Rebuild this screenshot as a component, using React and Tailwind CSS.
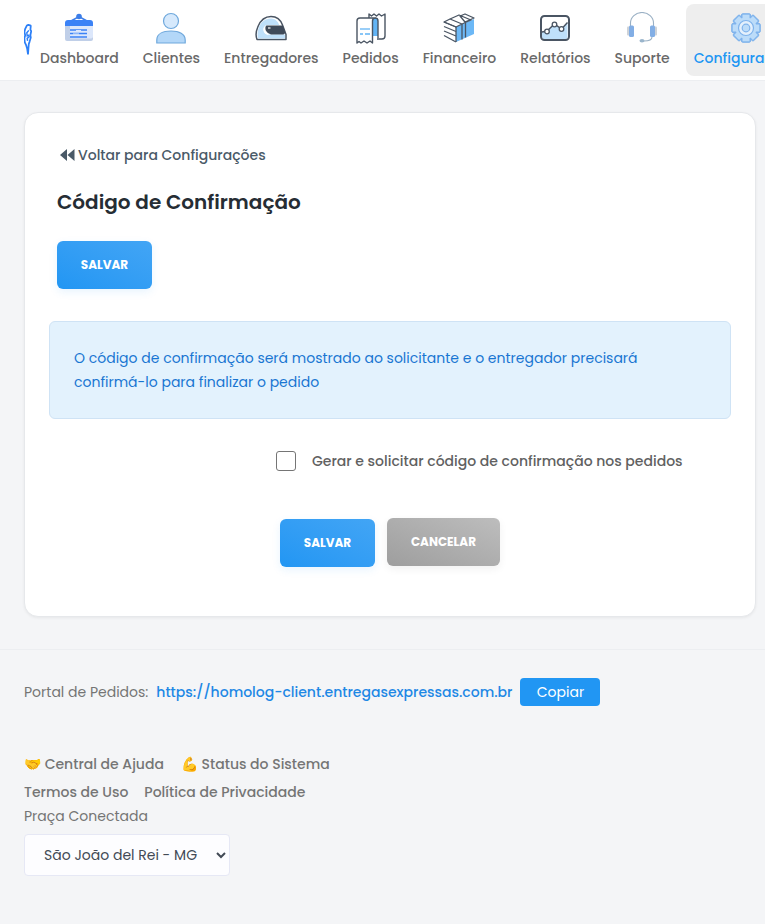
import React from "react";

function IconDash() {
  return (
    <svg width="30" height="30" viewBox="0 0 30 30">
      <path d="M7 8 L15 3.500 L23 8" fill="none" stroke="#3b7de8" strokeWidth="1.5" />
      <circle cx="15" cy="3.500" r="2.800" fill="#3b7de8" />
      <path d="M1 10a3 3 0 0 1 3-3h22a3 3 0 0 1 3 3v4H1z" fill="#3b82f6" />
      <path d="M1 13h28v13a2 2 0 0 1-2 2H3a2 2 0 0 1-2-2z" fill="#c0cfe8" />
      <path d="M6 13h23v10.500a2 2 0 0 1-2 2H6z" fill="#dce7fb" />
      <path d="M6 17h17M6 20.500h17M6 24h17" stroke="#3b82f6" strokeWidth="1.500" />
      <path d="M12 17.500h5M9 21h6" stroke="#dce7fb" strokeWidth="1.200" />
    </svg>
  );
}
function IconUser() {
  return (
    <svg width="30" height="32" viewBox="0 0 30 32">
      <circle cx="15" cy="9" r="7.500" fill="#d6e9fc" stroke="#6fa8dc" strokeWidth="1.200" />
      <path d="M.8 31v-3c0-6 6-9 14.200-9s14.200 3 14.200 9v3z" fill="#b3d7f8" stroke="#6fa8dc" strokeWidth="1.200" />
    </svg>
  );
}
function IconHelmet() {
  return (
    <svg width="32" height="26" viewBox="0 0 32 26">
      <path d="M2 24.500c-1.200-3-1.200-8 1-13C5.500 5.500 10.500 1.500 16 1.500c5.500 0 9.500 3 11.500 8.500l3.500 9.500v5z" fill="#fff" stroke="#4a5563" strokeWidth="1.500" strokeLinejoin="round" />
      <path d="M3 23.500c-.8-3-.8-7 1-11.500C6 7 10.500 3.500 15.500 3.500c4 0 7 2 8.800 6.500H14c-4 0-6 3-5 6 .5 2 2 3.500 4.500 3.500H30v4z" fill="#bfe0fa" />
      <path d="M8.500 13a5 5 0 0 1 5-3H14c-3 .5-4.500 3-3.500 6 .5 2 2 3 4 4-3.500 0-5-1.500-5.800-3.500-.5-1.500-.5-2.500-.2-3.500z" fill="#fff" />
      <path d="M11.500 10.500h15.500c1 0 1.500 1 2 3l1.200 3.500c0 1.500-1 2.500-2 2.500H17c-2.500 0-6-2.500-6.500-5-.3-2 0-3.500 1-4z" fill="#3f4a59" />
      <path d="M13 13h2.500" stroke="#fff" strokeWidth="1.200" />
    </svg>
  );
}
function IconOrders() {
  return (
    <svg width="32" height="32" viewBox="0 0 32 32">
      <path d="M14 6V2l2.500 2 2.500-2 2.500 2 2.500-2 2.500 2 3.500-2v22a3 3 0 0 1-3 3h-5" fill="#fff" stroke="#4a5563" strokeWidth="1.400" strokeLinejoin="round" />
      <path d="M16 6h7v18h-7z" fill="#62b4f5" />
      <path d="M2 31V9a3 3 0 0 1 3-3h15a3 3 0 0 0-2.500 3v22l-2.500-2-3 2-3-2-3 2-2-1.500z" fill="#fff" stroke="#4a5563" strokeWidth="1.400" strokeLinejoin="round" />
      <path d="M20 6a3 3 0 0 1 3 3v17" fill="none" stroke="#4a5563" strokeWidth="1.400" />
      <path d="M5 17h10" stroke="#62b4f5" strokeWidth="1.300" />
      <path d="M5 22h3M10 22h5" stroke="#62b4f5" strokeWidth="1.300" />
    </svg>
  );
}
function IconBooks() {
  return (
    <svg width="32" height="30" viewBox="0 0 32 30">
      <path d="M13 14v15l18-8V6z" fill="#6cb8f6" />
      <path d="M1 9l12 5 6-3-12-5zM7 6l9-4 12 5-9 4zM17 3l5-2 9 4-9 4z" fill="#fff" stroke="#4a5563" strokeWidth="1.300" strokeLinejoin="round" />
      <path d="M1 9l12 5M1 13.500l12 5M1 18l12 5M1 22.500l12 6.500" fill="none" stroke="#4a5563" strokeWidth="1.300" />
      <path d="M13 14v15M19 11v15.500M22.500 9.500v15" fill="none" stroke="#4a5563" strokeWidth="1.300" />
    </svg>
  );
}
function IconChart() {
  return (
    <svg width="30" height="26" viewBox="0 0 30 26">
      <rect x="1" y="1" width="28" height="24" rx="3.500" fill="#fff" />
      <path d="M2 17l5-1 7.500-7 7 5 6-6.500V22a2 2 0 0 1-2 2H4a2 2 0 0 1-2-2z" fill="#bfe0fa" />
      <rect x="1" y="1" width="28" height="24" rx="3.500" fill="none" stroke="#4a5563" strokeWidth="2" />
      <path d="M2 17l5-1 7.500-7 7 5 6-6.500" fill="none" stroke="#4a5563" strokeWidth="1.400" />
      <circle cx="7" cy="16.500" r="2.300" fill="#fff" stroke="#4a5563" strokeWidth="1.300" />
      <circle cx="14.500" cy="9.500" r="2.300" fill="#fff" stroke="#4a5563" strokeWidth="1.300" />
      <circle cx="21.500" cy="14" r="2.300" fill="#fff" stroke="#4a5563" strokeWidth="1.300" />
    </svg>
  );
}
function IconHeadset() {
  return (
    <svg width="30" height="32" viewBox="0 0 30 32">
      <path d="M3.500 17v-6a11.500 10.500 0 0 1 23 0v6" fill="none" stroke="#9ab0c4" strokeWidth="1.100" />
      <rect x="0" y="14.500" width="3" height="9" rx="1" fill="#cfd3d8" />
      <rect x="27" y="14.500" width="3" height="9" rx="1" fill="#cfd3d8" />
      <rect x="2" y="13.500" width="5" height="11.500" rx="1.500" fill="#82aee5" />
      <rect x="23" y="13.500" width="5" height="11.500" rx="1.500" fill="#82aee5" />
      <path d="M25 25c0 3-3 4-8 4" fill="none" stroke="#9ab0c4" strokeWidth="1.100" />
      <ellipse cx="15" cy="28.800" rx="2.500" ry="1.800" fill="#9ab5cc" />
    </svg>
  );
}
function IconGear() {
  const teeth = [0, 45, 90, 135, 180, 225, 270, 315];
  return (
    <svg width="30" height="30" viewBox="0 0 30 30">
      {teeth.map((a) => (
        <rect key={a} x="10.500" y="0.700" width="9" height="7" rx="1.200" fill="#7fb3ec" stroke="#7fb3ec" strokeWidth="1" transform={`rotate(${a} 15 15)`} />
      ))}
      <circle cx="15" cy="15" r="11.500" fill="#7fb3ec" />
      {teeth.map((a) => (
        <rect key={a} x="11.500" y="1.700" width="7" height="7" fill="#bcdcf9" transform={`rotate(${a} 15 15)`} />
      ))}
      <circle cx="15" cy="15" r="10.500" fill="#bcdcf9" />
      <circle cx="15" cy="15" r="7.500" fill="#e4f0fc" stroke="#7fb3ec" strokeWidth="1.200" />
      <circle cx="15" cy="15" r="3.800" fill="#bcdcf9" stroke="#7fb3ec" strokeWidth="1.200" />
    </svg>
  );
}
function Logo() {
  return (
    <svg width="10" height="42" viewBox="0 0 10 42">
      <path d="M3.500 3l2-1 3 1-.5 5 1 2-1 5 .5 3-1.500 5L6 26l-.5 6-.5 7-1-7-1.500-5L1 24l-.5-5 1-4-1-4 1-4z" fill="none" stroke="#2b7ff7" strokeWidth="2.200" strokeLinejoin="bevel" />
      <path d="M6 9l-2.500 3 .5 4 2-1 .5 2-2.500 2 .5 3" fill="none" stroke="#2b7ff7" strokeWidth="1.800" />
    </svg>
  );
}

function NavItem({ icon, label, active }) {
  return (
    <a className={`flex h-[72px] shrink-0 flex-col items-center justify-end rounded-lg px-2 pb-[8px] ${active ? "bg-[#eeeeee] text-[#2196f3]" : "text-[#696969]"}`}>
      <span className="flex h-[36px] items-center justify-center">{icon}</span>
      <span className="mt-[2px] text-[14px] font-medium leading-[20px]">{label}</span>
    </a>
  );
}

function Btn({ children, gray, className = "" }) {
  return (
    <button
      className={`flex h-12 items-center justify-center rounded-[6px] text-[12px] font-bold text-white ${
        gray
          ? "bg-linear-to-tr from-[#9e9e9e] to-[#bdbdbd] shadow-[0_3px_8px_rgba(0,0,0,0.06)]"
          : "bg-linear-to-tr from-[#2196f3] to-[#42a5f5] shadow-[0_3px_8px_rgba(33,150,243,0.1)]"
      } ${className}`}
    >
      {children}
    </button>
  );
}

export default function App() {
  return (
    <div className="min-h-[924px] w-[765px] overflow-hidden bg-[#f4f5f7] font-['Poppins','Inter','Liberation_Sans',sans-serif]">
      <header className="flex h-[81px] items-center overflow-hidden border-b border-[#eceef1] bg-white pl-[24px]">
        <span className="flex w-[8px] shrink-0 justify-center"><Logo /></span>
        <nav className="flex shrink-0 items-center gap-2">
          <NavItem icon={<IconDash />} label="Dashboard" />
          <NavItem icon={<IconUser />} label="Clientes" />
          <NavItem icon={<IconHelmet />} label="Entregadores" />
          <NavItem icon={<IconOrders />} label="Pedidos" />
          <NavItem icon={<IconBooks />} label="Financeiro" />
          <NavItem icon={<IconChart />} label="Relatórios" />
          <NavItem icon={<IconHeadset />} label="Suporte" />
          <NavItem icon={<IconGear />} label="Configurações" active />
        </nav>
      </header>

      <main className="pl-[24px] pr-[9px] pt-[31px]">
        <section className="h-[505px] rounded-[14px] border border-[#e6e8eb] bg-white px-[24px] pt-[32px] shadow-[0_1px_3px_rgba(0,0,0,0.06)]">
          <a className="ml-[11px] flex items-center gap-[3px] text-[14px] font-medium leading-[20px] text-[#4a5a68]">
            <svg width="15" height="12" viewBox="0 0 15 12" fill="#4a5a68"><path d="M7 0v12L0 6z M14.500 0v12L7.500 6z" /></svg>
            Voltar para Configurações
          </a>
          <h1 className="ml-[8px] mt-[22px] text-[20px] font-semibold leading-[30px] text-[#262d34]">Código de Confirmação</h1>
          <Btn className="ml-[8px] mt-[24px] w-[95px]">SALVAR</Btn>
          <div className="mt-[32px] h-[98px] rounded-[6px] border border-[#cfe3f5] bg-[#e3f2fd] px-[24px] pt-[24px] text-[14px] leading-[24px] text-[#1976d2]">
            O código de confirmação será mostrado ao solicitante e o entregador precisará<br />confirmá-lo para finalizar o pedido
          </div>
          <label className="ml-[227px] mt-[32px] flex items-center gap-[16px] text-[14px] font-medium leading-[20px] text-[#616161]">
            <span className="h-[20px] w-[20px] rounded-[3px] border border-[#757575] bg-white" />
            Gerar e solicitar código de confirmação nos pedidos
          </label>
          <div className="ml-[231px] mt-[48px] flex items-center gap-[12px]">
            <Btn className="w-[95px]">SALVAR</Btn>
            <Btn gray className="w-[113px] -translate-y-px">CANCELAR</Btn>
          </div>
        </section>
      </main>

      <footer className="mt-[32px] border-t border-[#eceef1] px-[24px] pt-[28px]">
        <div className="flex h-[28px] items-center text-[14px]">
          <span className="text-[#757575]">Portal de Pedidos:</span>
          <a className="ml-[8px] font-medium text-[#1e88e5]">https://homolog-client.entregasexpressas.com.br</a>
          <button className="ml-[8px] h-[28px] w-[80px] rounded-[4px] bg-[#2196f3] text-[14px] text-white">Copiar</button>
        </div>
        <div className="mt-[46px] flex h-[24px] items-center gap-[17px] text-[14px] font-medium text-[#757575]">
          <span>🤝 Central de Ajuda</span>
          <span>💪 Status do Sistema</span>
        </div>
        <div className="mt-[4px] flex h-[24px] items-center gap-[16px] text-[14px] font-medium text-[#757575]">
          <span>Termos de Uso</span>
          <span>Política de Privacidade</span>
        </div>
        <div className="h-[24px] text-[14px] leading-[24px] text-[#757575]">Praça Conectada</div>
        <select className="mt-[6px] h-[42px] w-[206px] rounded-[4px] border border-[#e6e8f5] bg-[#fdfdff] px-[15px] text-[14px] text-[#424a55]">
          <option>São João del Rei - MG</option>
        </select>
      </footer>
    </div>
  );
}
